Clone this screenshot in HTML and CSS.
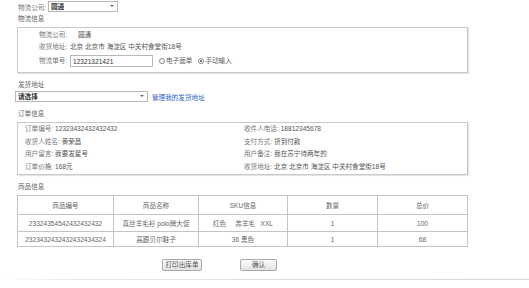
FILE: index.html
```html
<!DOCTYPE html>
<html lang="zh-CN">
<head>
    <meta charset="UTF-8">
    <title>发货</title>
    <link rel="stylesheet" href="styles.css">
</head>
<body>
    <div class="page">
        <div class="top-row">
            <span class="label">物流公司:</span>
            <div class="select select-company">
                <span class="select-text">圆通</span>
                <span class="select-arrow"></span>
            </div>
        </div>

        <!-- 物流信息 -->
        <div class="title title-first">物流信息</div>
        <div class="box logistics">
            <div class="info-row">
                <span class="label fixed">物流公司:</span>
                <span class="value indent">圆通</span>
            </div>
            <div class="info-row">
                <span class="label fixed">收货地址:</span>
                <span class="value">北京 北京市 海淀区 中关村食堂街18号</span>
            </div>
            <div class="info-row tracking">
                <span class="label fixed">物流单号:</span>
                <input class="text-input" type="text" value="12321321421">
                <span class="radio"><span class="radio-dot"></span>电子面单</span>
                <span class="radio"><span class="radio-dot checked"></span>手动输入</span>
            </div>
        </div>

        <!-- 发货地址 -->
        <div class="title">发货地址</div>
        <div class="address-row">
            <div class="select select-address">
                <span class="select-text">请选择</span>
                <span class="select-arrow"></span>
            </div>
            <a class="link" href="#">管理我的发货地址</a>
        </div>

        <!-- 订单信息 -->
        <div class="title">订单信息</div>
        <div class="box order">
            <div class="order-item"><span class="label">订单编号:</span> <span class="value">12323432432432432</span></div>
            <div class="order-item"><span class="label">收件人电话:</span> <span class="value">18812345678</span></div>
            <div class="order-item"><span class="label">收货人姓名:</span> <span class="value">黄荣昌</span></div>
            <div class="order-item"><span class="label">支付方式:</span> <span class="value">货到付款</span></div>
            <div class="order-item"><span class="label">用户留言:</span> <span class="value">我要发星号</span></div>
            <div class="order-item"><span class="label">用户备注:</span> <span class="value">我在苏宁待两年的</span></div>
            <div class="order-item"><span class="label">订单价格:</span> <span class="value">168元</span></div>
            <div class="order-item"><span class="label">收货地址:</span> <span class="value">北京 北京市 海淀区 中关村食堂街18号</span></div>
        </div>

        <!-- 商品信息 -->
        <div class="title">商品信息</div>
        <table class="goods">
            <colgroup>
                <col style="width: 96px">
                <col style="width: 85px">
                <col style="width: 89px">
                <col style="width: 90px">
                <col style="width: 90px">
            </colgroup>
            <tr class="head">
                <td>商品编号</td>
                <td>商品名称</td>
                <td>SKU信息</td>
                <td>数量</td>
                <td>总价</td>
            </tr>
            <tr class="row-1">
                <td>23324354542432432432</td>
                <td>真丝羊毛衫 polo牌大促</td>
                <td>红色&nbsp;&nbsp;&nbsp;&nbsp;&nbsp;羔羊毛&nbsp;&nbsp;&nbsp;XXL</td>
                <td>1</td>
                <td>100</td>
            </tr>
            <tr class="row-2">
                <td>2323432432432432434324</td>
                <td>高跟贝尔鞋子</td>
                <td>36 黑色</td>
                <td>1</td>
                <td>68</td>
            </tr>
        </table>

        <div class="actions">
            <button class="btn btn-print">打印出库单</button>
            <button class="btn btn-ok">确认</button>
        </div>
    </div>
    <div class="footer-line"></div>
</body>
</html>
```

FILE: styles.css
```css
body {
    margin: 0;
    font-family: "Liberation Sans", "Noto Sans CJK SC", sans-serif;
    font-size: 6.6px;
    color: #666;
    background: #fff;
}
.page {
    width: 451px;
    padding: 1px 0 0 17px;
}
.label {
    color: #777;
}
.value {
    color: #555;
}
.top-row {
    display: flex;
    align-items: center;
    height: 11px;
    padding-left: 1px;
}
.top-row .label {
    width: 30px;
}
.select {
    position: relative;
    display: flex;
    align-items: center;
    height: 9px;
    border: 1px solid #b8b8b8;
    background: #fff;
}
.select-text {
    padding-left: 2px;
    color: #333;
    font-weight: bold;
    line-height: 9px;
}
.select-arrow {
    position: absolute;
    right: 3px;
    top: 3px;
    width: 0;
    height: 0;
    border-left: 2px solid transparent;
    border-right: 2px solid transparent;
    border-top: 2px solid #666;
}
.select-company {
    width: 68px;
}
.title {
    height: 10px;
    line-height: 10px;
    margin: 7px 0 3px 1px;
    color: #666;
}
.title-first {
    margin-top: 2px;
}
.box {
    border: 1px solid #c8c8c8;
    box-shadow: 1px 1px 1px #e4e4e4;
}
.logistics {
    padding: 2px 0 5px 21px;
}
.info-row {
    display: flex;
    align-items: center;
    height: 10px;
    line-height: 10px;
    margin-bottom: 2px;
}
.info-row .fixed {
    width: 31px;
    flex-shrink: 0;
}
.info-row .indent {
    padding-left: 8px;
}
.tracking {
    height: 12px;
    margin: 3px 0 0;
}
.text-input {
    box-sizing: border-box;
    width: 83px;
    height: 12px;
    margin: 0 6px 0 0;
    padding: 0 2px;
    border: 1px solid #b8b8b8;
    font: inherit;
    color: #333;
    outline: none;
}
.radio {
    display: flex;
    align-items: center;
    margin-right: 6px;
    color: #666;
}
.radio-dot {
    box-sizing: border-box;
    position: relative;
    width: 6px;
    height: 6px;
    margin-right: 1px;
    border: 1px solid #888;
    border-radius: 50%;
    background: #fff;
}
.radio-dot.checked::after {
    content: "";
    position: absolute;
    left: 1px;
    top: 1px;
    width: 2px;
    height: 2px;
    border-radius: 50%;
    background: #444;
}
.address-row {
    display: flex;
    align-items: center;
    margin-left: -2px;
    height: 11px;
    margin-top: -2px;
}
.select-address {
    width: 131px;
}
.link {
    margin-left: 4px;
    color: #2f5fc4;
    text-decoration: none;
}
.order {
    display: grid;
    grid-template-columns: 219px 1fr;
    grid-auto-rows: 12.5px;
    padding: 0 0 1px 7px;
}
.order-item {
    line-height: 12.5px;
    white-space: nowrap;
}
.goods {
    width: 451px;
    border-collapse: collapse;
    table-layout: fixed;
    color: #666;
}
.goods td {
    padding: 0;
    border: 1px solid #c4c4c4;
    text-align: center;
    white-space: nowrap;
    overflow: hidden;
}
.goods .head td {
    height: 18px;
}
.goods .row-1 td {
    height: 16px;
}
.goods .row-2 td {
    height: 14px;
}
.actions {
    display: flex;
    gap: 38px;
    padding-left: 145px;
    margin-top: 12px;
}
.btn {
    height: 12px;
    padding: 0;
    border: 1px solid #a8a8a8;
    border-radius: 2px;
    background: linear-gradient(#fbfbfb, #e2e2e2);
    font: inherit;
    color: #555;
    line-height: 10px;
}
.btn-print {
    width: 40px;
}
.btn-ok {
    width: 37px;
}
.footer-line {
    height: 1px;
    margin-top: 8px;
    background: linear-gradient(to right, #fff, #e6e6e6 80px, #d6d6d6);
}
```
